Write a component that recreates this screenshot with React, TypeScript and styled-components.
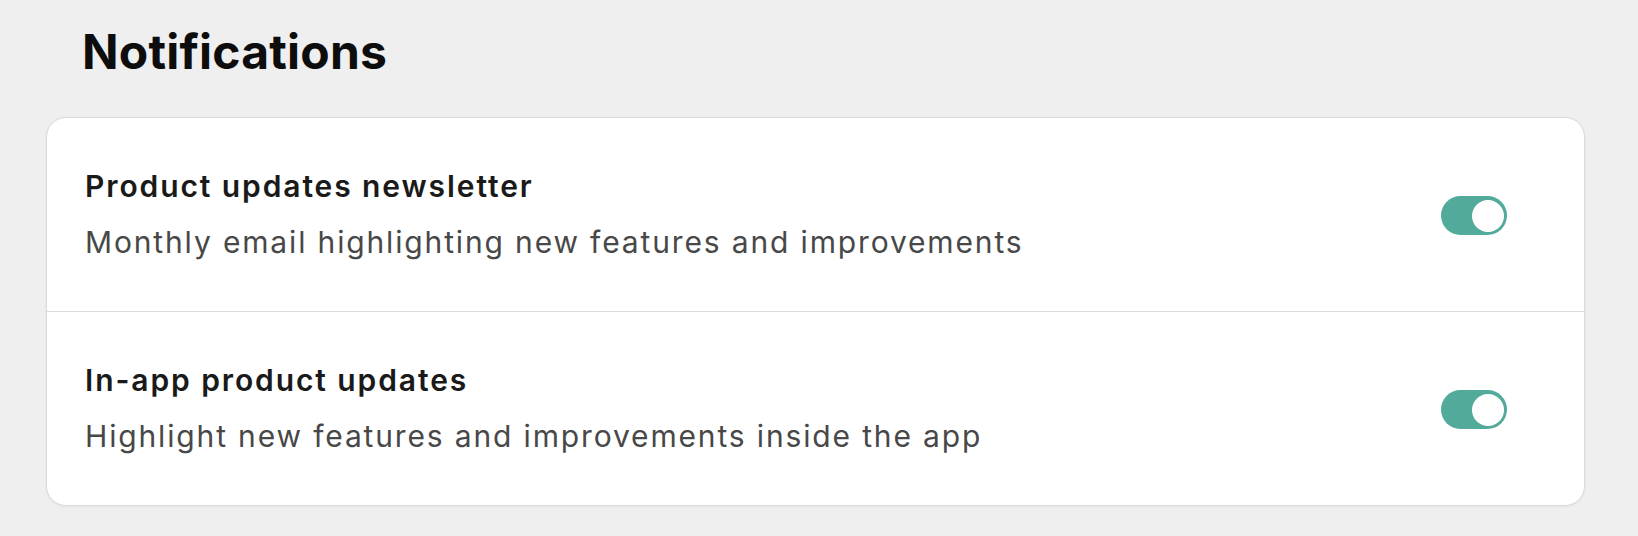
import { useState } from "react";
import styled, { createGlobalStyle } from "styled-components";

const GlobalStyle = createGlobalStyle`
  html, body {
    margin: 0;
    padding: 0;
    background-color: #efefef;
    font-family: Inter, "Noto Sans", sans-serif;
    -webkit-font-smoothing: antialiased;
  }
`;

const Page = styled.div`
  padding: 23px 53px 30px 46px;
`;

const Heading = styled.h1`
  margin: 0 0 36px 36px;
  font-size: 48px;
  line-height: 1.2;
  font-weight: 700;
  color: #0d0d0d;
  letter-spacing: 0.2px;
`;

const Card = styled.div`
  background-color: #ffffff;
  border: 1px solid #d9d9d9;
  border-radius: 20px;
  box-shadow: 0 1px 3px rgba(0, 0, 0, 0.05);
  overflow: hidden;
`;

const Row = styled.div`
  display: flex;
  align-items: center;
  justify-content: space-between;
  padding: 47px 77px 48px 38px;
  & + & {
    border-top: 1px solid #dcdcdc;
  }
`;

const Texts = styled.div`
  display: flex;
  flex-direction: column;
  gap: 14px;
`;

const Title = styled.div`
  font-size: 30px;
  line-height: 42px;
  font-weight: 600;
  color: #1a1a1a;
  letter-spacing: 1.9px;
`;

const Description = styled.div`
  font-size: 30px;
  line-height: 42px;
  font-weight: 400;
  color: #484848;
  letter-spacing: 1.85px;
`;

const Track = styled.button<{ $on: boolean }>`
  position: relative;
  width: 66px;
  height: 39px;
  margin-top: 4px;
  padding: 0;
  border: none;
  border-radius: 999px;
  background-color: ${(p) => (p.$on ? "#52aa9b" : "#cfcfcf")};
  cursor: pointer;
  flex-shrink: 0;
  transition: background-color 0.2s;
`;

const Knob = styled.span<{ $on: boolean }>`
  position: absolute;
  top: 3.5px;
  left: ${(p) => (p.$on ? "30.5px" : "3.5px")};
  width: 32px;
  height: 32px;
  border-radius: 50%;
  background-color: #ffffff;
  transition: left 0.2s;
`;

interface ISetting {
  id: string;
  title: string;
  description: string;
}

const settings: ISetting[] = [
  {
    id: "newsletter",
    title: "Product updates newsletter",
    description: "Monthly email highlighting new features and improvements",
  },
  {
    id: "inapp",
    title: "In-app product updates",
    description: "Highlight new features and improvements inside the app",
  },
];

function Toggle({ on, onClick }: { on: boolean; onClick: () => void }) {
  return (
    <Track $on={on} onClick={onClick} role="switch" aria-checked={on}>
      <Knob $on={on} />
    </Track>
  );
}

export default function App() {
  const [enabled, setEnabled] = useState<Record<string, boolean>>({
    newsletter: true,
    inapp: true,
  });

  return (
    <>
      <GlobalStyle />
      <Page>
        <Heading>Notifications</Heading>
        <Card>
          {settings.map((s) => (
            <Row key={s.id}>
              <Texts>
                <Title>{s.title}</Title>
                <Description>{s.description}</Description>
              </Texts>
              <Toggle
                on={enabled[s.id]}
                onClick={() => setEnabled((prev) => ({ ...prev, [s.id]: !prev[s.id] }))}
              />
            </Row>
          ))}
        </Card>
      </Page>
    </>
  );
}
